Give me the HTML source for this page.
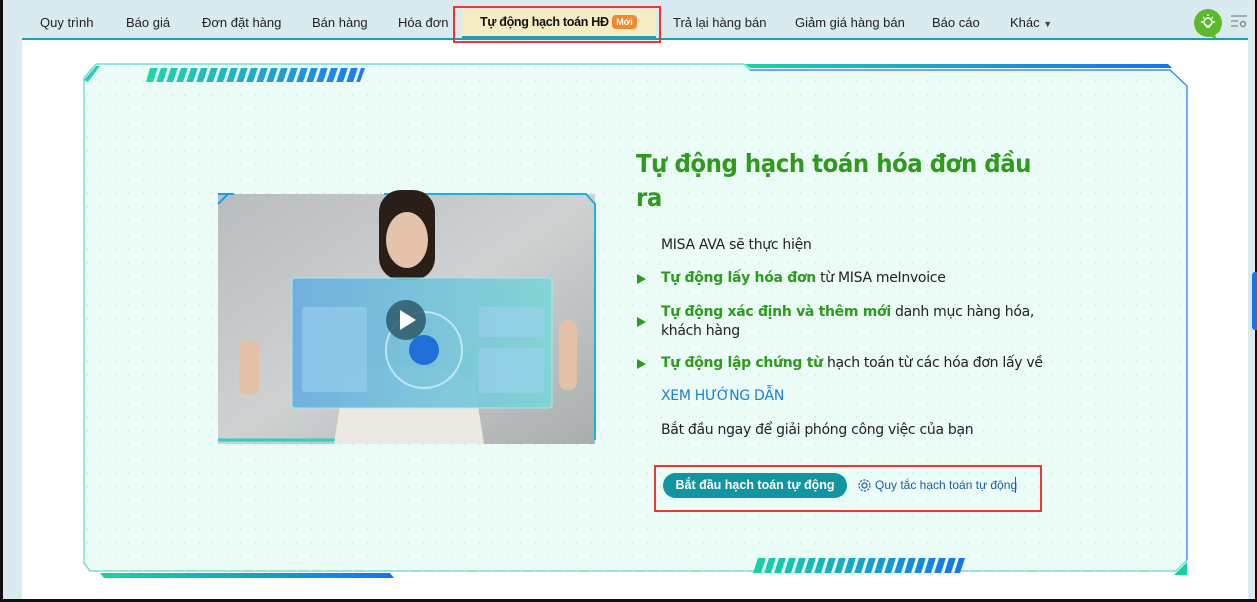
<!DOCTYPE html>
<html><head><meta charset="utf-8"><style>
*{margin:0;padding:0;box-sizing:border-box}
body{width:1257px;height:602px;overflow:hidden;background:#d9ebee;font-family:"Liberation Sans","DejaVu Sans",sans-serif;position:relative}
.abs{position:absolute}
.tab{position:absolute;top:15px;font-size:13px;color:#222;white-space:nowrap}
.item{position:absolute;left:661px;font-size:14px;color:#222;font-family:"DejaVu Sans","Liberation Sans",sans-serif;letter-spacing:-0.3px;white-space:nowrap}
.g{color:#2e9a1e;font-weight:bold}
.tri{position:absolute;left:637px;width:0;height:0;border-top:5px solid transparent;border-bottom:5px solid transparent;border-left:9px solid #2e9a1e}
</style></head><body>
<div class="abs" style="left:0;top:0;width:3px;height:602px;background:#111"></div>
<div class="abs" style="right:0;top:0;width:2px;height:602px;background:#111"></div>
<div class="abs" style="left:0;top:599px;width:1257px;height:3px;background:#111"></div>
<div class="abs" style="left:22px;top:38px;width:1226px;height:561px;background:#fff;border-top:2px solid #17a2ae"></div>
<div class="abs" style="left:1252px;top:272px;width:5px;height:58px;background:#1a73e8;border-radius:3px 0 0 3px"></div>

<div class="tab" style="left:40px">Quy trình</div>
<div class="tab" style="left:126px">Báo giá</div>
<div class="tab" style="left:202px">Đơn đặt hàng</div>
<div class="tab" style="left:312px">Bán hàng</div>
<div class="tab" style="left:398px">Hóa đơn</div>
<div class="abs" style="left:462px;top:9px;width:194px;height:30px;background:#f5ebc4;border-bottom:3px solid #17a2ae;border-radius:3px 3px 0 0"></div>
<div class="tab" style="left:480px;font-weight:bold;color:#111;font-size:12.5px;letter-spacing:-0.3px">Tự động hạch toán HĐ</div>
<div class="abs" style="left:612px;top:15px;width:25px;height:14px;background:#f08a2c;border-radius:4px;color:#fff;font-size:9px;font-weight:bold;text-align:center;line-height:14px">Mới</div>
<div class="abs" style="left:453px;top:6px;width:208px;height:37px;border:2px solid #e53935"></div>
<div class="tab" style="left:673px">Trả lại hàng bán</div>
<div class="tab" style="left:795px">Giảm giá hàng bán</div>
<div class="tab" style="left:932px">Báo cáo</div>
<div class="tab" style="left:1010px">Khác <span style="font-size:9px;color:#444">▼</span></div>
<svg class="abs" style="left:1193px;top:8px" width="32" height="32"><circle cx="15" cy="15" r="14" fill="#5cb82c"/><path d="M20 24 L24 31 L16 28Z" fill="#5cb82c"/><circle cx="15" cy="14" r="4" fill="none" stroke="#fff" stroke-width="1.5"/><path d="M13 19h4M15 6v2M8 14h2M20 14h2M10 9l1 1M20 9l-1 1" stroke="#fff" stroke-width="1.5"/></svg>
<svg class="abs" style="left:1230px;top:14px" width="18" height="16"><path d="M1 2h16M1 7h7M1 12h7" stroke="#888" stroke-width="1.3"/><circle cx="13" cy="10" r="2.5" fill="none" stroke="#888" stroke-width="1.5"/></svg>

<svg class="abs" style="left:80px;top:60px" width="1112" height="525">
<defs>
<linearGradient id="gb" x1="0" x2="1"><stop offset="0" stop-color="#16d4a4"/><stop offset="1" stop-color="#1672f0"/></linearGradient>
<pattern id="dots" width="14" height="14" patternUnits="userSpaceOnUse"><circle cx="7" cy="7" r="0.9" fill="#d2ece6"/></pattern>
</defs>
<path d="M4 18 L16 4 L664 4 L670 10 L1090 10 L1107 26 L1107 500 L1096 511 L10 511 L4 503 Z" fill="#ebfbf6" stroke="#5bd7c8" stroke-width="1.2"/>
<path d="M4 18 L16 4 L664 4 L670 10 L1090 10 L1107 26 L1107 500 L1096 511 L10 511 L4 503 Z" fill="url(#dots)"/>
<path d="M670 10 L1090 10 L1107 26 L1107 500" fill="none" stroke="#2f7bf0" stroke-width="1.2"/>
<path d="M4 20 L16 6 L20 6 L8 22 Z" fill="#2ccfb0"/>
<g fill="url(#gb)"><path d="M70 8 L285 8 L280 22 L66 22 Z" opacity="0.95"/></g>
<g stroke="#ebfbf6" stroke-width="3">
<path d="M80 6 L74 24M90 6 L84 24M100 6 L94 24M110 6 L104 24M120 6 L114 24M130 6 L124 24M140 6 L134 24M150 6 L144 24M160 6 L154 24M170 6 L164 24M180 6 L174 24M190 6 L184 24M200 6 L194 24M210 6 L204 24M220 6 L214 24M230 6 L224 24M240 6 L234 24M250 6 L244 24M260 6 L254 24M270 6 L264 24M280 6 L274 24"/></g>
<path d="M665 4 L1088 4 L1092 8 L670 8 Z" fill="url(#gb)"/>
<path d="M20 513 L310 513 L314 518 L24 518 Z" fill="url(#gb)"/>
<path d="M678 498 L885 498 L880 513 L673 513 Z" fill="url(#gb)"/>
<g stroke="#ebfbf6" stroke-width="3"><path d="M688 496 L682 515M698 496 L692 515M708 496 L702 515M718 496 L712 515M728 496 L722 515M738 496 L732 515M748 496 L742 515M758 496 L752 515M768 496 L762 515M778 496 L772 515M788 496 L782 515M798 496 L792 515M808 496 L802 515M818 496 L812 515M828 496 L822 515M838 496 L832 515M848 496 L842 515M858 496 L852 515M868 496 L862 515M878 496 L872 515"/></g>
<path d="M1107 502 L1107 515 L1094 515 Z" fill="#1ccfa0"/>
</svg>

<svg class="abs" style="left:214px;top:190px" width="386" height="258">
<defs>
<linearGradient id="bg" x1="0" y1="0" x2="1" y2="1"><stop offset="0" stop-color="#b9bcbf"/><stop offset="0.5" stop-color="#cfd1d2"/><stop offset="1" stop-color="#a9adae"/></linearGradient>
<linearGradient id="pn" x1="0" x2="1"><stop offset="0" stop-color="#6aaee0"/><stop offset="1" stop-color="#7fd6d6"/></linearGradient>
</defs>
<rect x="4" y="4" width="377" height="250" fill="url(#bg)"/>
<path d="M4 14 L14 4 M4 4 L20 4" stroke="#1aa0e0" stroke-width="2"/>
<path d="M170 4 L372 4 L381 14 L381 250" fill="none" stroke="#1ab0e0" stroke-width="2"/>
<path d="M4 250 L150 250" stroke="#2cd0c0" stroke-width="3"/>
<rect x="165" y="0" width="56" height="90" rx="22" fill="#2a1e18"/>
<ellipse cx="193" cy="50" rx="21" ry="28" fill="#e5c2aa"/>
<path d="M130 190 Q193 160 260 190 L270 254 L120 254Z" fill="#ece9e2"/>
<rect x="25" y="150" width="20" height="55" rx="8" fill="#e3c0a8"/>
<rect x="345" y="130" width="18" height="70" rx="8" fill="#e3c0a8"/>
<rect x="78" y="88" width="260" height="130" rx="3" fill="url(#pn)" opacity="0.92" stroke="#9ef0f0"/>
<rect x="88" y="117" width="65" height="85" rx="3" fill="#9cd0ef" opacity="0.6"/>
<rect x="265" y="117" width="65" height="30" rx="3" fill="#9cd0ef" opacity="0.6"/>
<rect x="265" y="158" width="65" height="45" rx="3" fill="#9cd0ef" opacity="0.6"/>
<circle cx="210" cy="160" r="38" fill="none" stroke="#d8f6ff" stroke-width="2" opacity="0.7"/>
<circle cx="210" cy="160" r="15" fill="#1e6fd8"/>
<circle cx="192" cy="130" r="20" fill="#2d5a6a" opacity="0.85"/>
<path d="M186 120 L202 130 L186 140Z" fill="#fff"/>
</svg>

<div class="abs" style="left:636px;top:147px;font-size:25px;font-weight:bold;color:#2e9a1e;font-family:'DejaVu Sans','Liberation Sans',sans-serif;line-height:34px;letter-spacing:-0.5px;white-space:nowrap;transform:scaleX(0.915);transform-origin:0 0">Tự động hạch toán hóa đơn đầu<br>ra</div>
<div class="item" style="top:237px">MISA AVA sẽ thực hiện</div>
<div class="tri" style="top:274px"></div>
<div class="item" style="top:270px"><span class="g">Tự động lấy hóa đơn</span> từ MISA meInvoice</div>
<div class="tri" style="top:317px"></div>
<div class="item" style="top:303px;line-height:19px"><span class="g">Tự động xác định và thêm mới</span> danh mục hàng hóa,<br>khách hàng</div>
<div class="tri" style="top:359px"></div>
<div class="item" style="top:355px"><span class="g">Tự động lập chứng từ</span> hạch toán từ các hóa đơn lấy về</div>
<div class="item" style="top:388px;color:#1e7fd0">XEM HƯỚNG DẪN</div>
<div class="item" style="top:422px">Bắt đầu ngay để giải phóng công việc của bạn</div>

<div class="abs" style="left:654px;top:465px;width:388px;height:47px;border:2px solid #e53935"></div>
<div class="abs" style="left:663px;top:473px;width:184px;height:25px;border-radius:13px;background:#12959f;color:#fff;font-weight:bold;font-size:12.5px;text-align:center;line-height:25px;white-space:nowrap">Bắt đầu hạch toán tự động</div>
<svg class="abs" style="left:857px;top:478px" width="15" height="15"><circle cx="7.5" cy="7.5" r="2.5" fill="none" stroke="#1a5fa8" stroke-width="1.2"/><circle cx="7.5" cy="7.5" r="5.5" fill="none" stroke="#1a5fa8" stroke-width="1.2" stroke-dasharray="2.2 1.3"/></svg>
<div class="abs" style="left:875px;top:478px;font-size:12px;color:#1a5fa8;white-space:nowrap">Quy tắc hạch toán tự động</div>
<div class="abs" style="left:1015px;top:477px;width:1px;height:16px;background:#1a5fa8"></div>
</body></html>
